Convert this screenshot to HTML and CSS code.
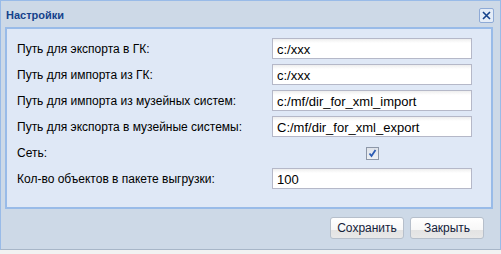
FILE: index.html
```html
<!DOCTYPE html>
<html lang="ru">
<head>
<meta charset="UTF-8">
<title>Настройки</title>
<link rel="stylesheet" href="styles.css">
</head>
<body>
<div class="window">
    <div class="title-bar">
        <span class="title">Настройки</span>
        <span class="close-tool">
            <svg width="13" height="13" viewBox="0 0 13 13"><path d="M3 3 L10 10 M10 3 L3 10" stroke="#15428b" stroke-width="1.6" fill="none"/></svg>
        </span>
    </div>
    <div class="panel">
        <div class="row">
            <label>Путь для экспорта в ГК:</label>
            <input class="field" type="text" value="c:/xxx">
        </div>
        <div class="row">
            <label>Путь для импорта из ГК:</label>
            <input class="field" type="text" value="c:/xxx">
        </div>
        <div class="row">
            <label>Путь для импорта из музейных систем:</label>
            <input class="field" type="text" value="c:/mf/dir_for_xml_import">
        </div>
        <div class="row">
            <label>Путь для экспорта в музейные системы:</label>
            <input class="field" type="text" value="C:/mf/dir_for_xml_export">
        </div>
        <div class="row">
            <label>Сеть:</label>
            <div class="check-cell">
                <span class="checkbox">
                    <svg width="11" height="11" viewBox="0 0 11 11"><path d="M2.5 5.5 L4.5 8 L8.5 2" stroke="#2c5cb4" stroke-width="1.8" fill="none"/></svg>
                </span>
            </div>
        </div>
        <div class="row">
            <label>Кол-во объектов в пакете выгрузки:</label>
            <input class="field" type="text" value="100">
        </div>
    </div>
    <div class="buttons">
        <button class="btn">Сохранить</button>
        <button class="btn">Закрыть</button>
    </div>
</div>
</body>
</html>
```
FILE: styles.css
```css
body {
    margin: 0;
    padding: 0;
    background-color: #f2f2f2;
    font-family: "Liberation Sans", Arial, sans-serif;
}

.window {
    box-sizing: border-box;
    width: 501px;
    height: 250px;
    border: 1px solid #99bbe8;
    border-bottom-color: #a7b6c8;
    background-color: #cdd9e7;
    padding: 0 7px 0 4px;
}

.title-bar {
    height: 26px;
    display: flex;
    align-items: center;
    justify-content: space-between;
}

.title {
    font-size: 11px;
    font-weight: bold;
    color: #15428b;
    padding-left: 1px;
    padding-top: 1px;
}

.close-tool {
    box-sizing: border-box;
    width: 15px;
    height: 15px;
    border: 1px solid #8eaad6;
    border-radius: 2px;
    background-color: #e4ecf7;
    display: flex;
    align-items: center;
    justify-content: center;
    margin-right: -1px;
    margin-top: 2px;
}

.panel {
    box-sizing: border-box;
    height: 182px;
    border: 2px solid #99bbe8;
    background-color: #dfe8f6;
    padding: 9px 0 0 10px;
    display: flex;
    flex-direction: column;
    gap: 5px;
}

.row {
    display: flex;
    align-items: center;
    height: 21px;
}

.row label {
    width: 255px;
    font-size: 12px;
    color: #000;
}

.field {
    box-sizing: border-box;
    width: 200px;
    height: 21px;
    margin: 0;
    border: 1px solid #b5b8c8;
    background: linear-gradient(#eeeeee, #ffffff 4px);
    padding: 1px 4px 0;
    font-family: "Liberation Sans", Arial, sans-serif;
    font-size: 13px;
    color: #000;
    outline: none;
}

.check-cell {
    width: 200px;
    display: flex;
    justify-content: center;
    padding-top: 1px;
}

.checkbox {
    box-sizing: border-box;
    width: 13px;
    height: 13px;
    border: 1px solid #8d97a8;
    background: linear-gradient(#dfe3ea, #eef1f5);
    display: flex;
    align-items: center;
    justify-content: center;
}

.buttons {
    display: flex;
    justify-content: flex-end;
    gap: 6px;
    padding: 8px 9px 0 0;
}

.btn {
    box-sizing: border-box;
    width: 74px;
    height: 22px;
    border: 1px solid #b6bfcb;
    border-radius: 3px;
    background: linear-gradient(#ffffff 0, #f7f7f7 60%, #e3e3e3 60%, #e8e8e8 100%);
    font-family: "Liberation Sans", Arial, sans-serif;
    font-size: 12px;
    color: #14213a;
    padding: 0;
}
```
